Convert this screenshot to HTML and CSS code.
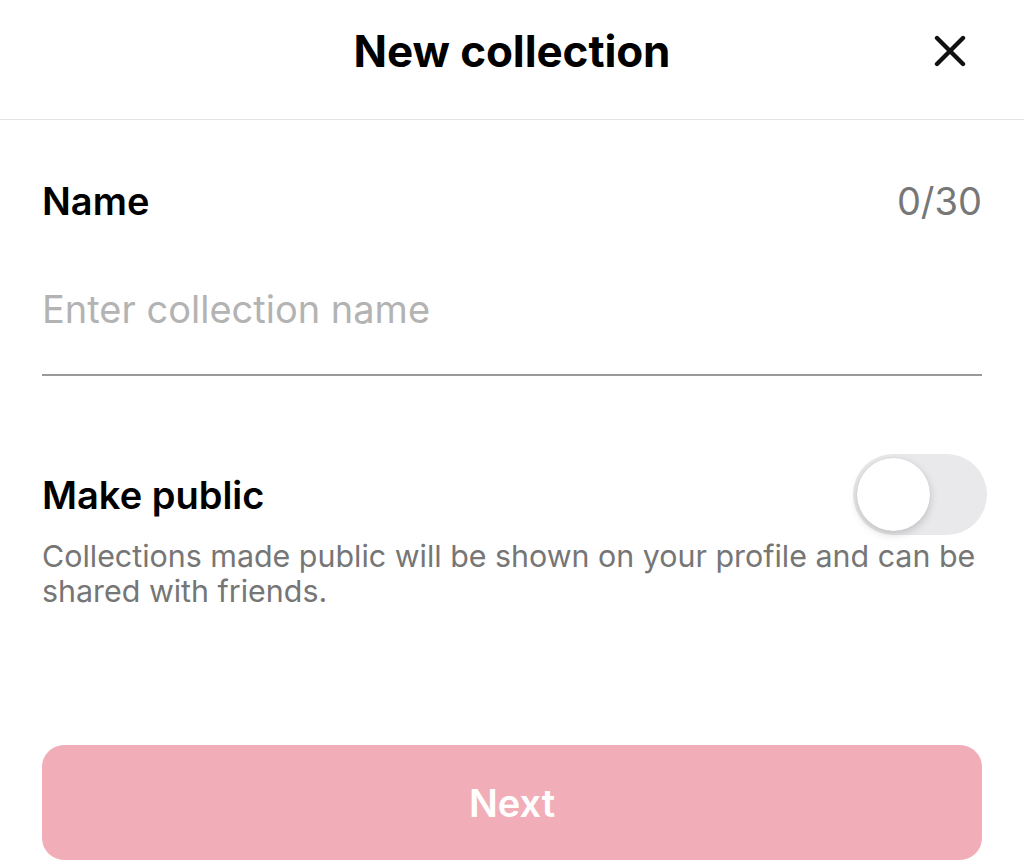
FILE: index.html
```html
<!DOCTYPE html>
<html lang="en">
<head>
<meta charset="utf-8">
<title>New collection</title>
<link rel="stylesheet" href="styles.css">
</head>
<body>
<div class="sheet">
  <header class="header">
    <div class="spacer"></div>
    <h1 class="title">New collection</h1>
    <button class="close" aria-label="Close">
      <svg width="32" height="32" viewBox="0 0 32 32"><path d="M3 3 L29 29 M29 3 L3 29" stroke="#111" stroke-width="4.4" stroke-linecap="round" fill="none"/></svg>
    </button>
  </header>
  <main class="content">
    <div class="label-row">
      <span class="label">Name</span>
      <span class="counter">0/30</span>
    </div>
    <div class="field">
      <input class="input" type="text" placeholder="Enter collection name">
    </div>
    <div class="public-row">
      <span class="label">Make public</span>
      <div class="toggle"><div class="knob"></div></div>
    </div>
    <p class="desc">Collections made public will be shown on your profile and can be shared with friends.</p>
    <button class="next">Next</button>
  </main>
</div>
</body>
</html>
```
FILE: styles.css
```css
* { box-sizing: border-box; }
html, body { margin: 0; padding: 0; background: #fff; }
body { font-family: Inter, "Liberation Sans", sans-serif; color: #161823; width: 1024px; height: 866px; overflow: hidden; }
.header {
  height: 120px;
  border-bottom: 1px solid #e3e3e3;
  display: grid;
  grid-template-columns: 1fr auto 1fr;
  align-items: center;
  padding: 0 58px 18px 58px;
}
.title { margin: 0; font-size: 44px; font-weight: 700; color: #000; letter-spacing: -0.1px; }
.close { justify-self: end; border: 0; background: none; padding: 0; width: 32px; height: 32px; display: flex; }
.content { padding: 0 42px; }
.label-row { display: flex; justify-content: space-between; align-items: baseline; margin-top: 58px; height: 46px; }
.label { font-size: 38px; font-weight: 600; color: #000; }
.counter { font-size: 38px; color: #777; }
.field { margin-top: 59px; border-bottom: 2px solid #9a9a9a; height: 93px; }
.input { border: 0; outline: none; padding: 0; font-family: inherit; font-size: 38px; width: 100%; height: 52px; background: transparent; }
.input::placeholder { color: #b3b3b3; }
.public-row { display: flex; justify-content: space-between; align-items: center; margin-top: 78px; margin-right: -5px; }
.toggle { width: 134px; height: 81px; border-radius: 41px; background: #e9e9eb; padding: 4px; }
.knob { width: 73px; height: 73px; border-radius: 50%; background: #fff; box-shadow: 0 3px 8px rgba(0,0,0,0.18), 0 0 1px rgba(0,0,0,0.1); }
.desc { margin: 4px 0 0; font-size: 30.4px; line-height: 35px; color: #767676; }
.next {
  display: block; width: 100%; height: 115px; margin-top: 136px;
  border: 0; border-radius: 22px; background: #f1aeb9; color: #fff;
  font-family: inherit; font-size: 38px; font-weight: 600;
}
```
